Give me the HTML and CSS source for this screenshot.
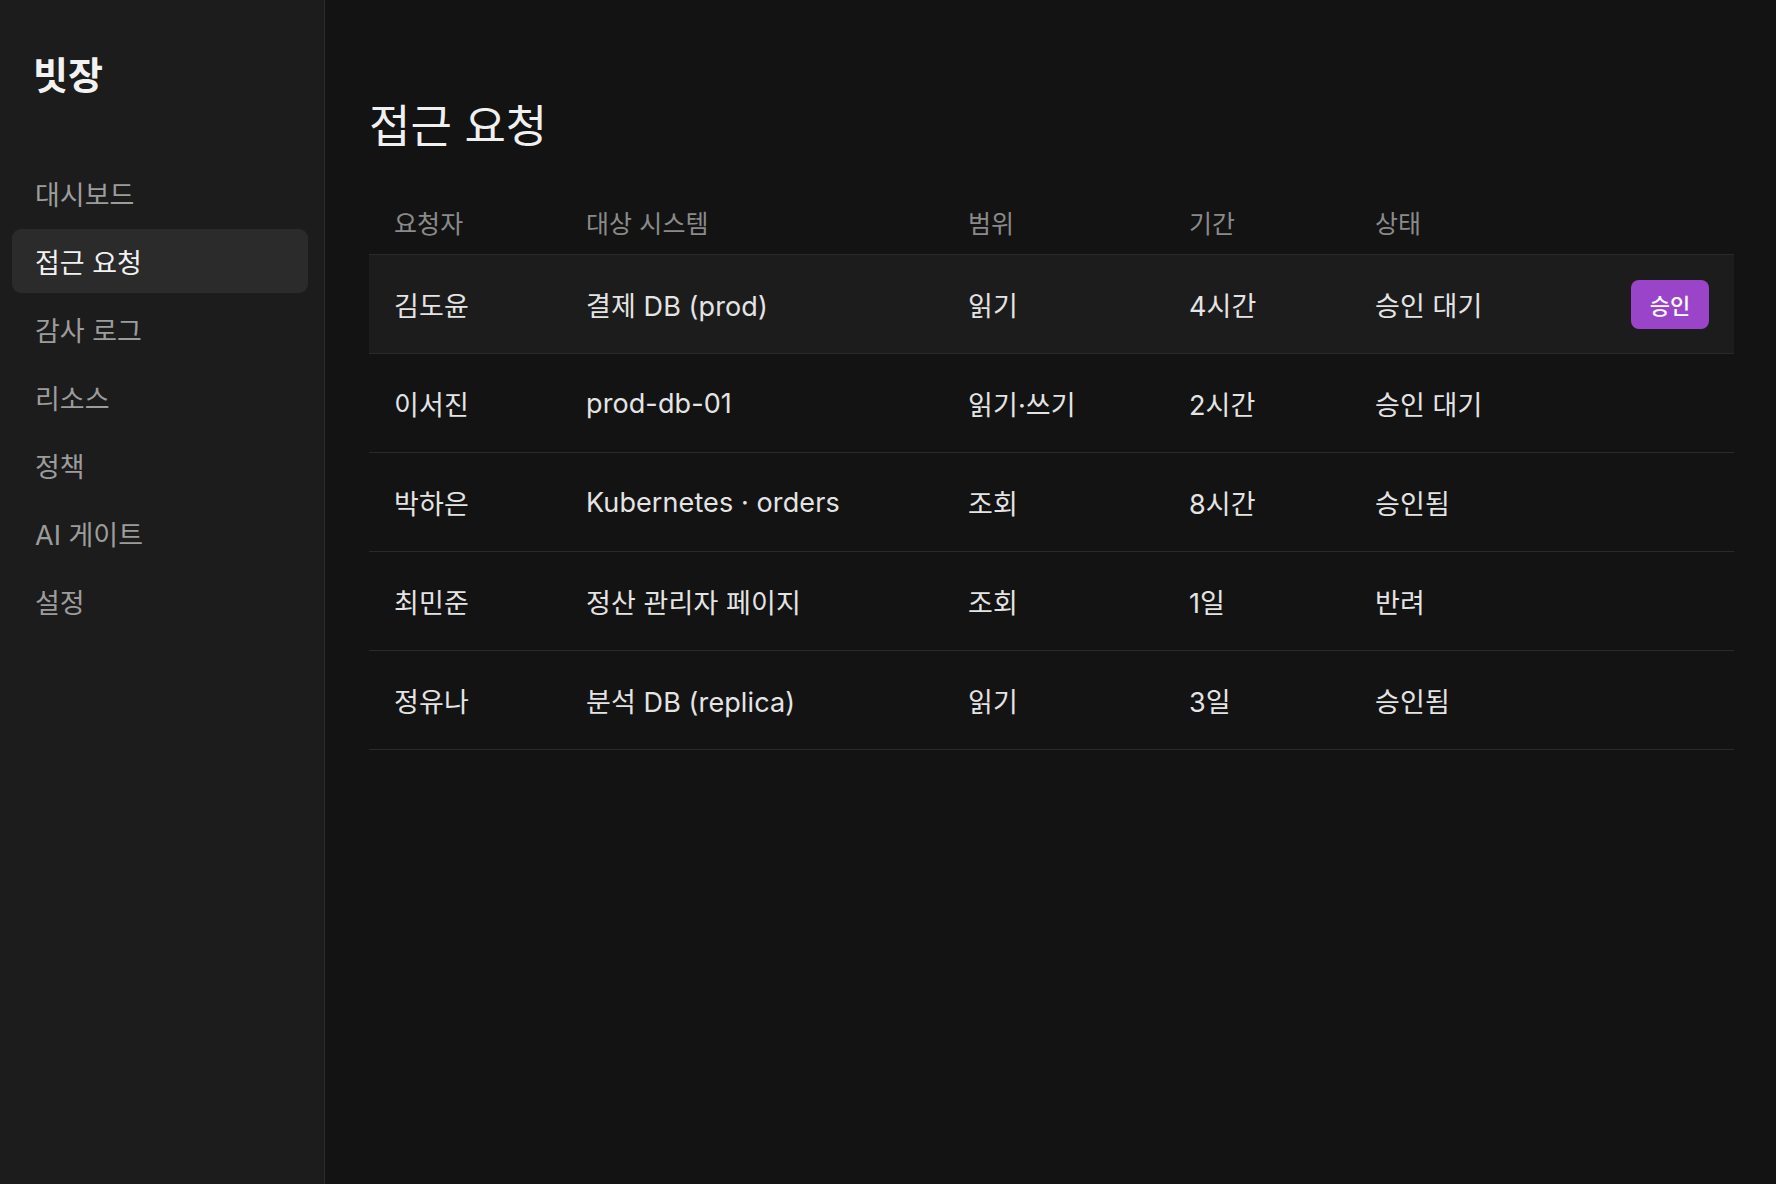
FILE: index.html
```html
<!DOCTYPE html>
<html lang="ko">
<head>
<meta charset="utf-8">
<title>빗장 - 접근 요청</title>
<link rel="stylesheet" href="styles.css">
</head>
<body>
<div class="app">
  <aside class="sidebar">
    <div class="logo">빗장</div>
    <nav class="nav">
      <a class="nav-item">대시보드</a>
      <a class="nav-item active">접근 요청</a>
      <a class="nav-item">감사 로그</a>
      <a class="nav-item">리소스</a>
      <a class="nav-item">정책</a>
      <a class="nav-item">AI 게이트</a>
      <a class="nav-item">설정</a>
    </nav>
  </aside>
  <main class="main">
    <h1 class="title">접근 요청</h1>
    <div class="table">
      <div class="row head">
        <div>요청자</div><div>대상 시스템</div><div>범위</div><div>기간</div><div>상태</div><div></div>
      </div>
      <div class="row hl">
        <div>김도윤</div><div>결제 DB (prod)</div><div>읽기</div><div>4시간</div><div>승인 대기</div><div><button class="approve">승인</button></div>
      </div>
      <div class="row">
        <div>이서진</div><div>prod-db-01</div><div>읽기·쓰기</div><div>2시간</div><div>승인 대기</div><div></div>
      </div>
      <div class="row">
        <div>박하은</div><div>Kubernetes · orders</div><div>조회</div><div>8시간</div><div>승인됨</div><div></div>
      </div>
      <div class="row">
        <div>최민준</div><div>정산 관리자 페이지</div><div>조회</div><div>1일</div><div>반려</div><div></div>
      </div>
      <div class="row">
        <div>정유나</div><div>분석 DB (replica)</div><div>읽기</div><div>3일</div><div>승인됨</div><div></div>
      </div>
    </div>
  </main>
</div>
</body>
</html>
```
FILE: styles.css
```css
* { box-sizing: border-box; }
html, body {
  margin: 0;
  height: 100%;
  background: #131313;
  font-family: Inter, "Noto Sans CJK KR", "Noto Sans", sans-serif;
  color: #e6e6e6;
}
.app {
  display: flex;
  height: 100vh;
}
.sidebar {
  width: 325px;
  flex: none;
  background: #1c1c1c;
  border-right: 1px solid #2c2c2c;
  padding: 55px 16px 0 12px;
}
.logo {
  font-size: 38px;
  font-weight: 600;
  line-height: 41px;
  color: #f2f2f2;
  padding-left: 21px;
  margin-bottom: 65px;
}
.nav {
  display: flex;
  flex-direction: column;
  gap: 4px;
}
.nav-item {
  display: flex;
  align-items: center;
  height: 64px;
  padding-left: 23px;
  font-size: 27px;
  color: #9c9c9c;
  border-radius: 9px;
}
.nav-item.active {
  background: #2b2b2b;
  color: #f2f2f2;
}
.main {
  flex: 1;
  padding: 102px 42px 0 44px;
}
.title {
  margin: 0 0 38px;
  font-size: 45px;
  line-height: 50px;
  font-weight: 400;
  color: #f0f0f0;
}
.row {
  display: grid;
  grid-template-columns: 192px 382px 221px 186px 1fr auto;
  align-items: center;
  height: 99px;
  padding: 0 25px 0 25px;
  border-bottom: 1px solid #2a2a2a;
  font-size: 27px;
  letter-spacing: 0.1px;
  color: #e4e4e4;
}
.row.head {
  height: 65px;
  font-size: 25px;
  color: #8a8a8a;
}
.row.hl {
  background: #1c1c1c;
}
.approve {
  width: 78px;
  height: 49px;
  border: none;
  border-radius: 8px;
  background: #9a45c9;
  color: #ffffff;
  font-family: inherit;
  font-size: 22px;
  font-weight: 500;
}
```
